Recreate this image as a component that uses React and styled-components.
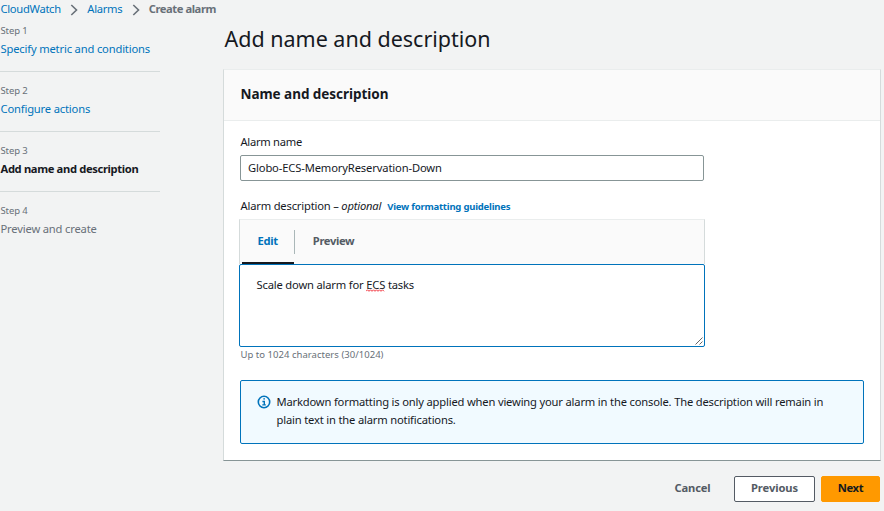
import React from 'react';
import styled, { createGlobalStyle } from 'styled-components';

const GlobalStyle = createGlobalStyle`
  * { box-sizing: border-box; }
  body {
    margin: 0;
    background: #f2f3f3;
    color: #16191f;
    font: 11.2px/18px "Noto Sans", sans-serif;
    letter-spacing: -0.18px;
    white-space: nowrap;
    overflow: hidden;
  }
`;

const Page = styled.div`
  width: 884px;
  height: 511px;
`;

const Breadcrumbs = styled.nav`
  display: flex;
  align-items: center;
  height: 18px;
  padding-left: 0.5px;
`;

const Crumb = styled.a`
  color: ${(p) => (p.$current ? '#687078' : '#0073bb')};
  font-weight: ${(p) => (p.$current ? 700 : 400)};
  letter-spacing: ${(p) => (p.$current ? '-0.44px' : '-0.3px')};
`;

const Separator = styled.svg`
  width: 8px;
  height: 12px;
  margin: 1px 9px 0 9.5px;
  fill: none;
  stroke: #687078;
  stroke-width: 1.6;
`;

const Columns = styled.div`
  display: grid;
  grid-template-columns: 160px 658px;
  column-gap: 63px;
`;

const Steps = styled.ol`
  margin: 0;
  padding: 0;
  list-style: none;
`;

const Step = styled.li`
  height: 60px;
  padding: 12px 0 0 0.5px;
  border-bottom: 1px solid #d5dbdb;
  &:first-child { height: 54px; padding-top: 6px; }
  &:last-child { border-bottom: 0; }
`;

const StepNumber = styled.div`
  margin-bottom: 2px;
  color: #687078;
  font-size: 9.5px;
  line-height: 14px;
  letter-spacing: -0.1px;
`;

const stepColors = { link: '#0073bb', active: '#16191f', disabled: '#687078' };

const StepTitle = styled.div`
  color: ${(p) => stepColors[p.$state]};
  font-weight: ${(p) => (p.$state === 'active' ? 700 : 400)};
  letter-spacing: ${(p) => (p.$state === 'active' ? '-0.35px' : '-0.17px')};
`;

const Title = styled.h1`
  margin: 6px 0 15px 1.5px;
  font-size: 21.5px;
  font-weight: 400;
  line-height: 30px;
  letter-spacing: -0.01px;
`;

const Card = styled.section`
  height: 392px;
  background: #fff;
  border: 1px solid #d5dbdb;
  border-top-color: #eaeded;
  border-bottom-color: #879596;
`;

const CardHeader = styled.h2`
  height: 51px;
  margin: 0;
  padding: 14px 16.5px;
  background: #fafafa;
  border-bottom: 1px solid #eaeded;
  font-size: 13.5px;
  line-height: 20px;
  letter-spacing: -0.04px;
`;

const CardBody = styled.div`
  padding: 12px 16px;
`;

const Label = styled.label`
  display: block;
  padding-left: 0.5px;
  letter-spacing: ${(p) => (p.$tight ? '-0.28px' : '-0.19px')};
`;

const Input = styled.input`
  display: block;
  width: 464px;
  height: 26px;
  margin: 4px 0 16px;
  padding: 0 7px 2px;
  border: 1px solid #879596;
  border-radius: 2px;
  color: inherit;
  font: inherit;
  letter-spacing: -0.14px;
  outline: 0;
`;

const GuideLink = styled.a`
  margin-left: 6px;
  color: #0073bb;
  font-size: 9.5px;
  font-weight: 700;
  letter-spacing: -0.215px;
`;

const Editor = styled.div`
  width: 466px;
  margin: 3px 0 0 -1px;
`;

const Tabs = styled.div`
  display: flex;
  height: 45px;
  padding-left: 2px;
  background: #fafafa;
  border: 1px solid #eaeded;
  border-right-color: #d5dbdb;
  border-left-color: #d5dbdb;
  border-bottom: 0;
`;

const Tab = styled.div`
  height: 44px;
  padding: ${(p) => (p.$active ? '12px 16px 0 15.5px' : '12px 18px 0')};
  border-bottom: ${(p) => (p.$active ? '2px solid #16191f' : '0')};
  color: ${(p) => (p.$active ? '#0073bb' : '#545b64')};
  font-weight: 700;
  letter-spacing: ${(p) => (p.$active ? '-0.3px' : '-0.36px')};
`;

const TabDivider = styled.div`
  width: 1px;
  height: 24px;
  margin-top: 10px;
  background: #aab7b8;
`;

const TextBox = styled.div`
  display: flex;
  justify-content: space-between;
  height: 83px;
  padding: 11px 1px 1px 16.5px;
  background: #fff;
  border: 1px solid #0073bb;
  border-radius: 2px;
`;

const Misspelled = styled.span`
  position: relative;
`;

const Squiggle = styled.svg`
  position: absolute;
  left: 0;
  top: 12px;
  width: 19px;
  height: 3px;
  fill: none;
  stroke: #f0202a;
  stroke-width: 0.9;
`;

const Grip = styled.svg`
  align-self: flex-end;
  width: 8px;
  height: 8px;
  stroke: #555;
  stroke-width: 0.9;
`;

const Hint = styled.div`
  padding: 1px 0 0 0.5px;
  color: #687078;
  font-size: 9.5px;
  line-height: 14px;
  letter-spacing: 0.03px;
`;

const Alert = styled.div`
  display: flex;
  gap: 5.5px;
  width: 624px;
  height: 64px;
  margin-top: 18px;
  padding: 12px 16px;
  background: #f1faff;
  border: 1px solid #0073bb;
  border-radius: 2px;
`;

const InfoIcon = styled.svg`
  flex: none;
  width: 14px;
  height: 14px;
  margin-top: 2px;
  fill: none;
  stroke: #0073bb;
`;

const Actions = styled.div`
  display: flex;
  justify-content: flex-end;
  gap: 6px;
  margin-top: 15px;
  padding-right: 1px;
`;

const buttonKinds = {
  link: { width: 71, color: '#545b64', fill: 'transparent', edge: 'transparent', spacing: -0.17 },
  normal: { width: 81, color: '#545b64', fill: '#fff', edge: '#545b64', spacing: -0.1 },
  primary: { width: 59, color: '#16191f', fill: '#ff9900', edge: '#ff9900', spacing: -0.4 },
};

const Button = styled.button`
  width: ${(p) => buttonKinds[p.$kind].width}px;
  height: 26px;
  padding: 0 0 2px;
  background: ${(p) => buttonKinds[p.$kind].fill};
  border: 1px solid ${(p) => buttonKinds[p.$kind].edge};
  border-radius: 2px;
  color: ${(p) => buttonKinds[p.$kind].color};
  font: inherit;
  font-weight: 700;
  letter-spacing: ${(p) => buttonKinds[p.$kind].spacing}px;
`;

const Chevron = () => (
  <Separator viewBox="0 0 8 12">
    <path d="M1.3 1 6.5 6 1.3 11" />
  </Separator>
);

const steps = [
  ['Specify metric and conditions', 'link'],
  ['Configure actions', 'link'],
  ['Add name and description', 'active'],
  ['Preview and create', 'disabled'],
];

export default function App() {
  return (
    <Page>
      <GlobalStyle />
      <Breadcrumbs>
        <Crumb>CloudWatch</Crumb>
        <Chevron />
        <Crumb>Alarms</Crumb>
        <Chevron />
        <Crumb $current>Create alarm</Crumb>
      </Breadcrumbs>
      <Columns>
        <Steps>
          {steps.map(([title, state], i) => (
            <Step key={title}>
              <StepNumber>Step {i + 1}</StepNumber>
              <StepTitle $state={state}>{title}</StepTitle>
            </Step>
          ))}
        </Steps>
        <main>
          <Title>Add name and description</Title>
          <Card>
            <CardHeader>Name and description</CardHeader>
            <CardBody>
              <Label $tight>Alarm name</Label>
              <Input defaultValue="Globo-ECS-MemoryReservation-Down" spellCheck={false} />
              <Label>
                Alarm description – <i>optional</i>
                <GuideLink>View formatting guidelines</GuideLink>
              </Label>
              <Editor>
                <Tabs>
                  <Tab $active>Edit</Tab>
                  <TabDivider />
                  <Tab>Preview</Tab>
                </Tabs>
                <TextBox>
                  <span>
                    Scale down alarm for{' '}
                    <Misspelled>
                      ECS
                      <Squiggle viewBox="0 0 19 3">
                        <path d="M0 2.3 1.5.8 3 2.3 4.5.8 6 2.3 7.5.8 9 2.3 10.5.8 12 2.3 13.5.8 15 2.3 16.5.8 18 2.3" />
                      </Squiggle>
                    </Misspelled>{' '}
                    tasks
                  </span>
                  <Grip viewBox="0 0 8 8">
                    <path d="M0.5 7.5 7.5 0.5M4.5 7.5 7.5 4.5" />
                  </Grip>
                </TextBox>
              </Editor>
              <Hint>Up to 1024 characters (30/1024)</Hint>
              <Alert>
                <InfoIcon viewBox="0 0 14 14">
                  <circle cx="7" cy="7" r="5.7" strokeWidth="1.6" />
                  <path d="M6.3 3.9h1.7M5.4 6.5h1.9v3.2M5.3 9.9h3.5" strokeWidth="1.4" />
                </InfoIcon>
                <div>
                  Markdown formatting is only applied when viewing your alarm in the console. The description will remain in
                  <br />
                  plain text in the alarm notifications.
                </div>
              </Alert>
            </CardBody>
          </Card>
          <Actions>
            <Button $kind="link">Cancel</Button>
            <Button $kind="normal">Previous</Button>
            <Button $kind="primary">Next</Button>
          </Actions>
        </main>
      </Columns>
    </Page>
  );
}
